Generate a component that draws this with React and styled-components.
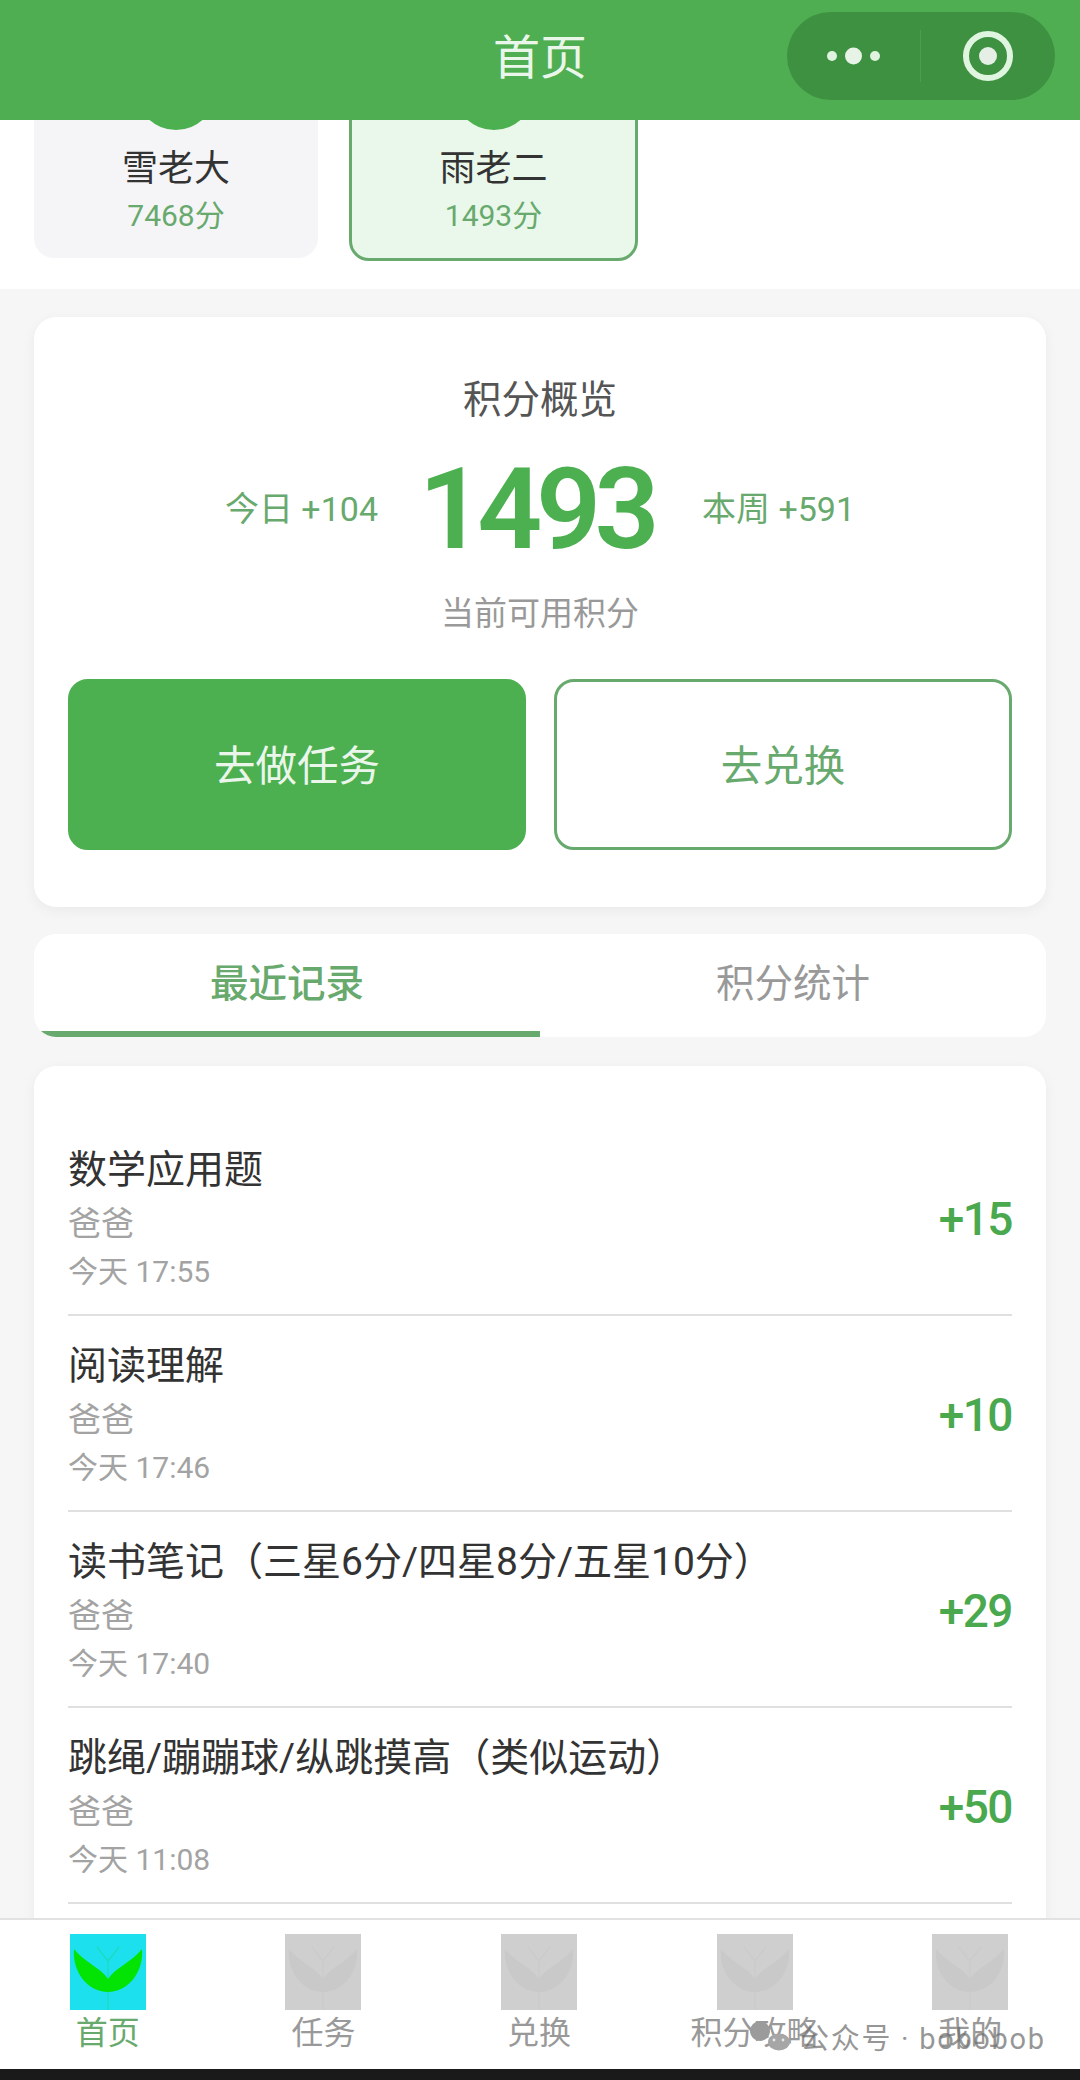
import React from "react";
import styled, { createGlobalStyle } from "styled-components";

const Global = createGlobalStyle`
  html, body { margin: 0; padding: 0; background: #f6f6f6; }
  * { box-sizing: border-box; }
  body { font-family: Roboto, "Noto Sans CJK SC", sans-serif; }
`;

const GREEN = "#4caf50";
const SOFT = "#68a96d";

const Page = styled.div`
  position: relative;
  width: 1080px;
  height: 2080px;
  display: flex;
  flex-direction: column;
  overflow: hidden;
  background: #f6f6f6;
`;

const Header = styled.header`
  position: relative;
  z-index: 2;
  flex: none;
  height: 120px;
  display: flex;
  align-items: center;
  justify-content: center;
  background: #4fae52;
`;

const HeaderTitle = styled.h1`
  margin: -5px 0 0;
  font-size: 47px;
  font-weight: 400;
  line-height: 60px;
  color: #eaf6ea;
`;

const Capsule = styled.div`
  position: absolute;
  left: 787px;
  top: 12px;
  width: 268px;
  height: 88px;
  display: flex;
  align-items: center;
  border-radius: 44px;
  background: #3f9142;
`;

const CapsuleSide = styled.div`
  display: flex;
  align-items: center;
  justify-content: center;
  height: 50px;
  width: ${(p) => p.$w}px;
`;

const CapsuleDivider = styled.div`
  width: 1px;
  height: 52px;
  background: #4c9d50;
`;

const Viewport = styled.main`
  flex: 1;
  min-height: 0;
  overflow: hidden;
`;

const Scrolled = styled.div`
  margin-top: -80px;
`;

const ChildSection = styled.section`
  display: flex;
  align-items: flex-start;
  gap: 31px;
  padding: 0 34px 28px;
  background: #fff;
`;

const ChildCard = styled.div`
  width: ${(p) => (p.$active ? 289 : 284)}px;
  display: flex;
  flex-direction: column;
  align-items: center;
  padding: 10px 0 22px;
  border-radius: 20px;
  background: ${(p) => (p.$active ? "#e9f8ea" : "#f5f5f7")};
  border: ${(p) => (p.$active ? `3px solid ${SOFT}` : "none")};
`;

const Avatar = styled.div`
  width: 80px;
  height: 80px;
  border-radius: 50%;
  background: ${GREEN};
  margin-top: ${(p) => (p.$active ? -3 : 0)}px;
`;

const ChildName = styled.div`
  margin-top: 15px;
  font-size: 36px;
  line-height: 48px;
  color: #333;
`;

const ChildScore = styled.div`
  margin-top: 3px;
  font-size: 30px;
  line-height: 40px;
  color: ${SOFT};
`;

const Card = styled.section`
  margin: ${(p) => p.$mt}px 34px 0;
  border-radius: 22px;
  background: #fff;
  box-shadow: 0 4px 14px rgba(0, 0, 0, 0.05);
`;

const Overview = styled(Card)`
  display: flex;
  flex-direction: column;
  align-items: center;
  padding: 56px 34px 57px;
`;

const OverviewTitle = styled.h2`
  margin: 0;
  font-size: 38.5px;
  font-weight: 400;
  line-height: 54px;
  color: #555;
`;

const PointsRow = styled.div`
  margin-top: 27px;
  height: 110px;
  width: 100%;
  display: flex;
  align-items: center;
  justify-content: center;
`;

const DeltaText = styled.div`
  width: 190px;
  text-align: ${(p) => p.$align};
  font-size: 34px;
  line-height: 40px;
  white-space: pre;
  color: ${SOFT};
`;

const BigPoints = styled.div`
  width: 324px;
  padding-right: 8px;
  text-align: center;
  font-size: 114px;
  font-weight: 600;
  line-height: 112px;
  letter-spacing: -6.5px;
  color: ${GREEN};
`;

const OverviewHint = styled.div`
  margin-top: 27px;
  font-size: 33px;
  line-height: 46px;
  color: #999;
`;

const ActionRow = styled.div`
  margin-top: 42px;
  width: 100%;
  display: grid;
  grid-template-columns: 458px 458px;
  gap: 28px;
`;

const ActionButton = styled.button`
  height: 171px;
  padding: 0 0 4px;
  border-radius: 20px;
  border: 3px solid ${(p) => (p.$primary ? GREEN : SOFT)};
  background: ${(p) => (p.$primary ? GREEN : "#fff")};
  color: ${(p) => (p.$primary ? "#eaf6ea" : SOFT)};
  font-family: inherit;
  font-size: 41.5px;
`;

const Tabs = styled(Card)`
  height: 103px;
  display: grid;
  grid-template-columns: 1fr 1fr;
  overflow: hidden;
  box-shadow: none;
`;

const Tab = styled.div`
  display: flex;
  align-items: center;
  justify-content: center;
  padding-bottom: 6px;
  font-size: 38.5px;
  font-weight: ${(p) => (p.$active ? 500 : 400)};
  color: ${(p) => (p.$active ? SOFT : "#999")};
  border-bottom: 6px solid ${(p) => (p.$active ? SOFT : "transparent")};
`;

const RecordList = styled(Card)`
  padding: 54px 34px 60px;
`;

const Record = styled.div`
  display: flex;
  align-items: center;
  justify-content: space-between;
  padding: 26px 0 22px;
  height: 196px;
  border-bottom: 2px solid #e0e0e0;
`;

const RecordInfo = styled.div`
  display: flex;
  flex-direction: column;
`;

const RecordTitle = styled.div`
  font-size: 39px;
  line-height: 48px;
  color: #333;
`;

const RecordBy = styled.div`
  margin-top: 8px;
  font-size: 33px;
  line-height: 44px;
  color: #a3a3a3;
`;

const RecordTime = styled.div`
  margin-top: 6px;
  font-size: 30px;
  line-height: 40px;
  color: #a3a3a3;
`;

const RecordPoints = styled.div`
  font-size: 46px;
  font-weight: 500;
  letter-spacing: -1.5px;
  color: #4aa94e;
`;

const TabBar = styled.nav`
  position: relative;
  z-index: 2;
  flex: none;
  height: 151px;
  display: grid;
  grid-template-columns: repeat(5, 1fr);
  padding: 14px 2px 0 0;
  background: #fff;
  border-top: 2px solid #e2e2e2;
`;

const TabItem = styled.div`
  display: flex;
  flex-direction: column;
  align-items: center;
  font-size: 32px;
  line-height: 46px;
  white-space: nowrap;
  color: ${(p) => (p.$active ? SOFT : "#999")};
`;

const HomeBar = styled.div`
  flex: none;
  height: 11px;
  background: #1a1a1a;
`;

const Watermark = styled.div`
  position: absolute;
  z-index: 3;
  left: 750px;
  top: 2017px;
  height: 38px;
  display: flex;
  align-items: center;
  gap: 10px;
  font-size: 29px;
  letter-spacing: 1.7px;
  white-space: pre;
  color: rgba(110, 110, 110, 0.72);
`;

const Leaf = ({ active }) => {
  const bg = active ? "#1ce0ee" : "#cfcfcf";
  const leaf = active ? "#04e404" : "#c9c9c9";
  const stem = active ? "#1cdcc0" : "#cbcbcb";
  return (
    <svg width="76" height="76" viewBox="0 0 76 76" style={{ display: "block" }}>
      <rect width="76" height="76" fill={bg} />
      <path
        d="M38 76V26M38 27L27 13M38 27L49 13"
        fill="none"
        stroke={stem}
        strokeWidth="1.5"
      />
      <path
        d="M4 15C14 28 30 33 38 45C46 33 62 28 72 15C74 38 58 58 38 58C18 58 2 38 4 15Z"
        fill={leaf}
      />
    </svg>
  );
};

const WeChatMark = () => (
  <svg width="40" height="32" viewBox="0 0 40 32" style={{ display: "block" }}>
    <ellipse cx="10" cy="11" rx="10" ry="10" fill="#9b9b9b" />
    <ellipse cx="29" cy="22" rx="11" ry="8.5" fill="#a6a6a6" />
    <circle cx="24" cy="20" r="1.4" fill="#e8e8e8" />
    <circle cx="33" cy="20" r="1.4" fill="#e8e8e8" />
  </svg>
);

const records = [
  { title: "数学应用题", time: "今天 17:55", pts: "+15" },
  { title: "阅读理解", time: "今天 17:46", pts: "+10" },
  { title: "读书笔记（三星6分/四星8分/五星10分）", time: "今天 17:40", pts: "+29" },
  { title: "跳绳/蹦蹦球/纵跳摸高（类似运动）", time: "今天 11:08", pts: "+50" },
];

const nav = ["首页", "任务", "兑换", "积分攻略", "我的"];

export default function App() {
  return (
    <Page>
      <Global />
      <Header>
        <HeaderTitle>首页</HeaderTitle>
        <Capsule>
          <CapsuleSide $w={133}>
            <svg width="60" height="24" viewBox="0 0 60 24">
              <circle cx="8" cy="12" r="5" fill="#dff3df" />
              <circle cx="29.5" cy="12" r="8.5" fill="#e6f3e6" />
              <circle cx="51" cy="12" r="5" fill="#dff3df" />
            </svg>
          </CapsuleSide>
          <CapsuleDivider />
          <CapsuleSide $w={134}>
            <svg width="52" height="52" viewBox="0 0 52 52">
              <circle cx="26" cy="26" r="22" fill="none" stroke="#dff5df" strokeWidth="6" />
              <circle cx="26" cy="26" r="9" fill="#e6efe6" />
            </svg>
          </CapsuleSide>
        </Capsule>
      </Header>
      <Viewport>
        <Scrolled>
          <ChildSection>
            <ChildCard>
              <Avatar />
              <ChildName>雪老大</ChildName>
              <ChildScore>7468分</ChildScore>
            </ChildCard>
            <ChildCard $active>
              <Avatar $active />
              <ChildName>雨老二</ChildName>
              <ChildScore>1493分</ChildScore>
            </ChildCard>
          </ChildSection>
          <Overview $mt={28}>
            <OverviewTitle>积分概览</OverviewTitle>
            <PointsRow>
              <DeltaText $align="right">今日 +104</DeltaText>
              <BigPoints>1493</BigPoints>
              <DeltaText $align="left">本周 +591</DeltaText>
            </PointsRow>
            <OverviewHint>当前可用积分</OverviewHint>
            <ActionRow>
              <ActionButton $primary>去做任务</ActionButton>
              <ActionButton>去兑换</ActionButton>
            </ActionRow>
          </Overview>
          <Tabs $mt={27}>
            <Tab $active>最近记录</Tab>
            <Tab>积分统计</Tab>
          </Tabs>
          <RecordList $mt={29}>
            {records.map((r) => (
              <Record key={r.title}>
                <RecordInfo>
                  <RecordTitle>{r.title}</RecordTitle>
                  <RecordBy>爸爸</RecordBy>
                  <RecordTime>{r.time}</RecordTime>
                </RecordInfo>
                <RecordPoints>{r.pts}</RecordPoints>
              </Record>
            ))}
          </RecordList>
        </Scrolled>
      </Viewport>
      <TabBar>
        {nav.map((n, i) => (
          <TabItem key={n} $active={i === 0}>
            <Leaf active={i === 0} />
            {n}
          </TabItem>
        ))}
      </TabBar>
      <HomeBar />
      <Watermark>
        <WeChatMark />
        公众号 · bobobob
      </Watermark>
    </Page>
  );
}
